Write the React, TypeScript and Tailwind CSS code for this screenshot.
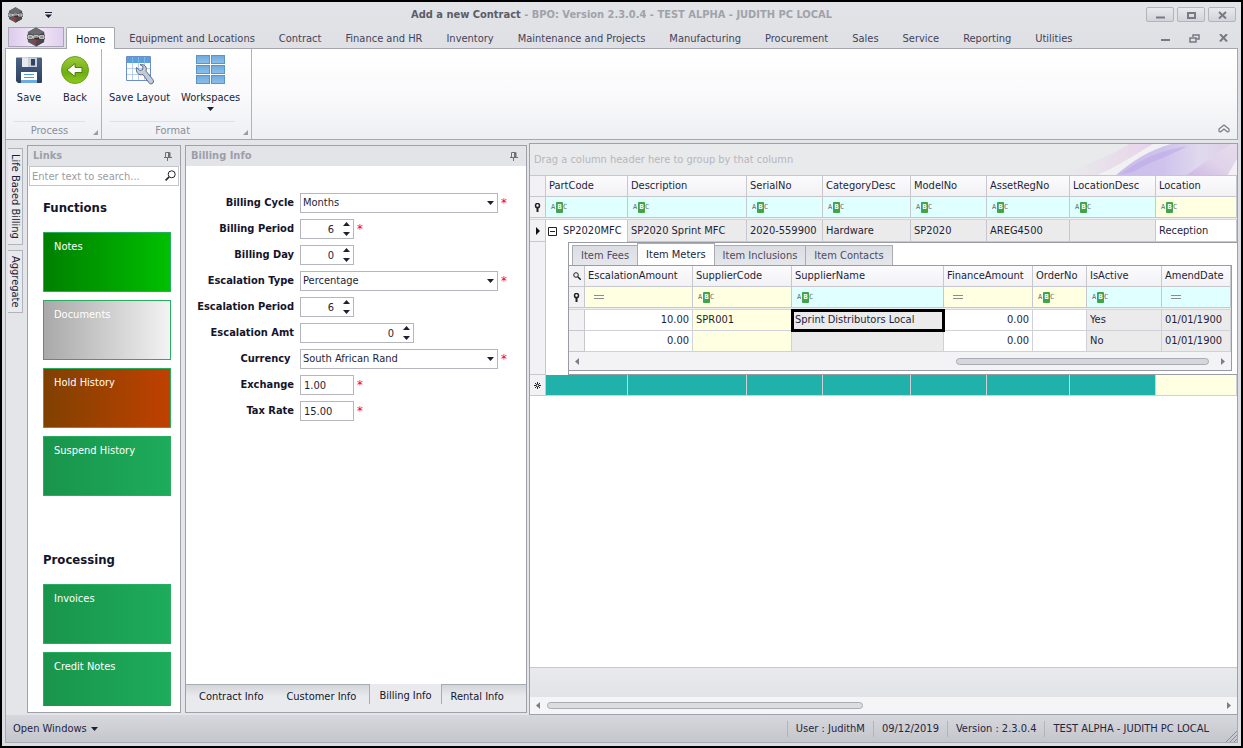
import type { ReactNode } from "react";
import clsx from "clsx";

const RIBBON_TABS = [
  "Equipment and Locations",
  "Contract",
  "Finance and HR",
  "Inventory",
  "Maintenance and Projects",
  "Manufacturing",
  "Procurement",
  "Sales",
  "Service",
  "Reporting",
  "Utilities",
];

interface Tile {
  label: string;
  className: string;
}

const FUNCTION_TILES: Tile[] = [
  { label: "Notes", className: "bg-linear-to-r from-[#008000] to-[#00c000]" },
  { label: "Documents", className: "bg-linear-to-r from-[#a9a9a9] to-[#f3f3f3]" },
  { label: "Hold History", className: "bg-linear-to-r from-[#804000] to-[#c04000]" },
  { label: "Suspend History", className: "bg-linear-to-r from-[#19954b] to-[#1dac5b]" },
];

const PROCESSING_TILES: Tile[] = [
  { label: "Invoices", className: "bg-linear-to-r from-[#19954b] to-[#1dac5b]" },
  { label: "Credit Notes", className: "bg-linear-to-r from-[#19954b] to-[#1dac5b]" },
];

interface Field {
  id: string;
  label: string;
  kind: "select" | "spin" | "text";
  value: string;
  width: string;
  required?: boolean;
}

const FIELDS: Field[] = [
  { id: "cycle", label: "Billing Cycle", kind: "select", value: "Months", width: "w-[198px]", required: true },
  { id: "period", label: "Billing Period", kind: "spin", value: "6", width: "w-[54px]", required: true },
  { id: "day", label: "Billing Day", kind: "spin", value: "0", width: "w-[54px]" },
  { id: "esc-type", label: "Escalation Type", kind: "select", value: "Percentage", width: "w-[198px]", required: true },
  { id: "esc-period", label: "Escalation Period", kind: "spin", value: "6", width: "w-[54px]" },
  { id: "esc-amt", label: "Escalation Amt", kind: "spin", value: "0", width: "w-[114px]" },
  { id: "currency", label: "Currency ", kind: "select", value: "South African Rand", width: "w-[198px]", required: true },
  { id: "exchange", label: "Exchange", kind: "text", value: "1.00", width: "w-[54px]", required: true },
  { id: "tax", label: "Tax Rate", kind: "text", value: "15.00", width: "w-[54px]", required: true },
];

interface Column {
  name: string;
  col: string;
  filter: "abc" | "eq";
  yellow?: boolean;
}

const ITEM_COLUMNS: Column[] = [
  { name: "PartCode", col: "w-[82px]", filter: "abc" },
  { name: "Description", col: "w-[119px]", filter: "abc" },
  { name: "SerialNo", col: "w-[76px]", filter: "abc" },
  { name: "CategoryDesc", col: "w-[88px]", filter: "abc" },
  { name: "ModelNo", col: "w-[76px]", filter: "abc" },
  { name: "AssetRegNo", col: "w-[83px]", filter: "abc" },
  { name: "LocationDesc", col: "w-[86px]", filter: "abc" },
  { name: "Location", col: "", filter: "abc", yellow: true },
];

const METER_COLUMNS: Column[] = [
  { name: "EscalationAmount", col: "w-[108px]", filter: "eq", yellow: true },
  { name: "SupplierCode", col: "w-[99px]", filter: "abc", yellow: true },
  { name: "SupplierName", col: "", filter: "abc" },
  { name: "FinanceAmount", col: "w-[89px]", filter: "eq", yellow: true },
  { name: "OrderNo", col: "w-[54px]", filter: "abc", yellow: true },
  { name: "IsActive", col: "w-[75px]", filter: "abc" },
  { name: "AmendDate", col: "w-[69px]", filter: "eq" },
];

const METER_ROWS = [
  ["10.00", "SPR001", "Sprint Distributors Local", "0.00", "", "Yes", "01/01/1900"],
  ["0.00", "", "", "0.00", "", "No", "01/01/1900"],
];

const METER_CELL = [
  "bg-white text-right",
  "bg-[#ffffe1]",
  "bg-[#ebebeb]",
  "bg-white text-right",
  "bg-white",
  "bg-[#ebebeb]",
  "bg-[#ebebeb]",
];

const STATUS_ITEMS = ["User : JudithM", "09/12/2019", "Version : 2.3.0.4", "TEST ALPHA - JUDITH PC LOCAL"];

function HexLogo({ className }: { className: string }) {
  return (
    <svg viewBox="0 0 20 22" className={className} aria-hidden="true">
      <path d="M10 .5 19 5.5v11L10 21.5 1 16.5v-11z" fill="#5a5a5d" />
      <path d="M10 .5 19 5.5 10 11 1 5.5z" fill="#6b6b70" />
      <path d="M10 11v10.5L19 16.5v-11z" fill="#47474a" />
      <path d="M0 8.500h20v5H0z" fill="#2e2e30" />
      <path
        d="M1 9.500h5v3H1zM1 11h5M7.500 13V9.500h5V11h-5M14 9.500h5v3h-5zM14 11h5"
        fill="none"
        stroke="#ececee"
        strokeWidth="1"
      />
      <circle cx="8" cy="17" r="1.500" fill="none" stroke="#d3232b" />
      <path d="M10 14.500 12.500 16" stroke="#d3232b" />
    </svg>
  );
}

function SaveIcon() {
  return (
    <svg viewBox="0 0 28 28" className="size-7" aria-hidden="true">
      <defs>
        <linearGradient id="disk" x1="0" y1="0" x2="0" y2="1">
          <stop offset="0" stopColor="#4a6287" />
          <stop offset="1" stopColor="#2d3f5f" />
        </linearGradient>
      </defs>
      <path d="M1 2.500a1 1 0 0 1 1-1h24a1 1 0 0 1 1 1V26a1 1 0 0 1-1 1H3l-2-2z" fill="url(#disk)" />
      <path d="M7 1.500h15v9.500H7z" fill="#c9d0da" />
      <path d="M7 1.500h6v9.500H7z" fill="#e6eaf0" />
      <path d="M16 3h4v6.500h-4z" fill="#2f4262" />
      <path d="M6 16h16v11H6z" fill="#fff" />
      <path d="M6 24h16v3H6z" fill="#6aaee4" />
      <path d="M9 18.500h10M9 21.500h10" stroke="#4d9bdc" />
    </svg>
  );
}

function BackIcon() {
  return (
    <svg viewBox="0 0 28 28" className="size-7" aria-hidden="true">
      <defs>
        <linearGradient id="back" x1="0" y1="0" x2="0" y2="1">
          <stop offset="0" stopColor="#9ccb3a" />
          <stop offset="0.600" stopColor="#6fae12" />
          <stop offset="1" stopColor="#8ecb1e" />
        </linearGradient>
      </defs>
      <circle cx="14" cy="14" r="13.500" fill="url(#back)" stroke="#6d9f22" />
      <path d="m6 14 8-6.500v4h7v5h-7v4z" fill="#fff" stroke="#4c8207" strokeLinejoin="round" />
    </svg>
  );
}

function LayoutIcon() {
  return (
    <svg viewBox="0 0 30 30" className="h-[30px] w-[30px]" aria-hidden="true">
      <path d="M1.500 1.500h24v24h-24z" fill="#fdfeff" stroke="#6c8fca" />
      <path d="M2 2h23v6H2z" fill="#5a9fdd" />
      <path d="M2 13.500h23M2 19.500h23M7.500 8v17M13.500 8v17M19.500 8v17" stroke="#b9cff0" />
      <path d="M7.500 2v6M13.500 2v6M19.500 2v6" stroke="#7fb6e8" />
      <path
        d="M11.500 12.500 15 15.500l2.500-.8.500-3-3-2c4-1 7.500 2 6 6.500l7 8.500c1 1.500.5 3.300-1 4-1.300.5-2.500 0-3.200-1L18 19.500c-4 1.500-7.500-2-6.500-7z"
        fill="#c3cbd8"
        stroke="#5c6b84"
        strokeLinejoin="round"
      />
    </svg>
  );
}

function WorkspacesIcon() {
  return (
    <svg viewBox="0 0 30 30" className="h-[30px] w-[30px]" aria-hidden="true">
      <defs>
        <linearGradient id="pane" x1="0" y1="0" x2="0" y2="1">
          <stop offset="0" stopColor="#6ea9dc" />
          <stop offset="1" stopColor="#8dc0ea" />
        </linearGradient>
      </defs>
      {[0.5, 10.5, 20.5].map((y) =>
        [0.5, 15.5].map((x) => (
          <rect key={`${x}-${y}`} x={x} y={y} width="13" height="8" fill="url(#pane)" stroke="#5b93cb" />
        )),
      )}
    </svg>
  );
}

function PinIcon() {
  return (
    <svg viewBox="0 0 8 9" className="h-[9px] w-2" aria-hidden="true">
      <path d="M1.500 5.500V.5h4v5" fill="none" stroke="#6d7079" />
      <path d="M4 .5h2.500v5H4zM0 5h8v1H0zM3 6h1v3H3z" fill="#6d7079" />
    </svg>
  );
}

function Caret({ dir = "down", className }: { dir?: "down" | "up"; className?: string }) {
  return (
    <svg viewBox="0 0 7 4" className={clsx("h-1 w-[7px]", className)} aria-hidden="true">
      <path d={dir === "down" ? "M0 0h7L3.500 4z" : "M0 4h7L3.500 0z"} fill="#1f1f33" />
    </svg>
  );
}

function SideArrow({ dir }: { dir: "left" | "right" }) {
  return (
    <svg viewBox="0 0 4 7" className="h-[7px] w-1 shrink-0" aria-hidden="true">
      <path d={dir === "left" ? "M4 0v7L0 3.500z" : "M0 0v7l4-3.500z"} fill="#7b7e88" />
    </svg>
  );
}

function FilterPin() {
  return (
    <svg viewBox="0 0 7 9" className="mx-auto h-[9px] w-[7px]" aria-hidden="true">
      <circle cx="3.500" cy="2.500" r="2" fill="#fff" stroke="#222" strokeWidth="1.500" />
      <path d="M1 4h5L4.500 5.500V9h-2V5.500z" fill="#222" />
    </svg>
  );
}

function FilterGlyph({ kind }: { kind: "abc" | "eq" }) {
  if (kind === "eq") {
    return (
      <svg viewBox="0 0 10 5" className="ml-1 h-[5px] w-[10px]" aria-hidden="true">
        <path d="M0 .5h10M0 3.500h10" stroke="#8b8b90" />
      </svg>
    );
  }
  return (
    <span className="flex items-center font-['DejaVu_Sans_Mono',monospace] text-[7px] leading-[11px] text-[#66666c]">
      <span className="w-[5px]">A</span>
      <span className="w-[7px] rounded-[1px] bg-[#3fa548] text-center font-bold text-white">B</span>
      <span>C</span>
    </span>
  );
}

interface RibbonButtonProps {
  icon: ReactNode;
  label: string;
  className: string;
  caret?: boolean;
}

function RibbonButton({ icon, label, className, caret }: RibbonButtonProps) {
  return (
    <button className={clsx("flex flex-col items-center pt-1 whitespace-nowrap", className)}>
      <span className="flex h-[34px] items-center">{icon}</span>
      <span className="mt-[3px] leading-4">{label}</span>
      {caret && <Caret className="mt-px" />}
    </button>
  );
}

function RibbonGroup({ caption, children }: { caption: string; children: ReactNode }) {
  return (
    <div className="relative flex flex-col border-r border-[#b1b3ba]">
      <div className="flex flex-1 pr-[3px]">{children}</div>
      <div className="mr-4 ml-2 border-t border-[#dfe0e5] pt-px text-center leading-4 text-[#8b8e97]">{caption}</div>
      <svg viewBox="0 0 5 5" className="absolute right-[3px] bottom-1 size-[5px]" aria-hidden="true">
        <path d="M5 0v5H0z" fill="#9b9da5" />
      </svg>
    </div>
  );
}

function PanelHeader({ title }: { title: string }) {
  return (
    <div className="flex h-5 shrink-0 items-center justify-between bg-[#e3e4e8] pr-2 pl-[5px]">
      <h2 className="font-bold text-[#9c9fa9]">{title}</h2>
      <button aria-label={`Pin ${title}`}>
        <PinIcon />
      </button>
    </div>
  );
}

function TileGroup({ title, tiles }: { title: string; tiles: Tile[] }) {
  return (
    <section>
      <h3 className="mb-4 text-[13px] leading-4 font-bold text-[#14142b]">{title}</h3>
      <div className="flex flex-col gap-2">
        {tiles.map((t) => (
          <button
            key={t.label}
            className={clsx(
              "flex h-[60px] items-start border border-[#27ae60] px-[10px] pt-[6px] leading-4 text-white",
              t.className,
            )}
          >
            {t.label}
          </button>
        ))}
      </div>
    </section>
  );
}

function FieldRow({ field }: { field: Field }) {
  const box = "h-5 border border-[#b4b7be] bg-white outline-none";
  return (
    <>
      <label htmlFor={field.id} className="text-right font-bold whitespace-pre text-[#14142b]">
        {field.label}
      </label>
      <div className="flex items-center gap-[3px]">
        <div className={clsx("relative flex", field.width)}>
          {field.kind === "select" && (
            <>
              <select id={field.id} defaultValue={field.value} className={clsx(box, "w-full appearance-none pl-[2px]")}>
                <option>{field.value}</option>
              </select>
              <Caret className="pointer-events-none absolute top-2 right-1" />
            </>
          )}
          {field.kind === "spin" && (
            <>
              <input id={field.id} defaultValue={field.value} className={clsx(box, "w-full pr-[19px] text-right")} />
              <span className="absolute top-[3px] right-1 flex flex-col gap-[6px]">
                <button type="button" aria-label={`Increase ${field.label}`}>
                  <Caret dir="up" />
                </button>
                <button type="button" aria-label={`Decrease ${field.label}`}>
                  <Caret />
                </button>
              </span>
            </>
          )}
          {field.kind === "text" && (
            <input id={field.id} defaultValue={field.value} className={clsx(box, "w-full pl-[3px]")} />
          )}
        </div>
        {field.required && <span className="text-[13px] leading-4 text-[#ff0000]">*</span>}
      </div>
    </>
  );
}

const TH =
  "border-r border-b border-[#c6c8ce] bg-linear-to-b from-[#fcfcfd] to-[#f2f2f5] p-0 pl-[3px] text-left font-normal";
const INDICATOR = "border-r border-b border-[#c6c8ce] bg-[#f2f2f5] p-0";

function FilterRow({ columns }: { columns: Column[] }) {
  return (
    <>
      <tr className="h-[21px]">
        <td className={INDICATOR}>
          <FilterPin />
        </td>
        {columns.map((c) => (
          <td
            key={c.name}
            className={clsx(
              "border-r border-b border-[#c6c8ce] p-0 pl-[5px]",
              c.yellow ? "bg-[#ffffe1]" : "bg-[#e0ffff]",
            )}
          >
            <FilterGlyph kind={c.filter} />
          </td>
        ))}
      </tr>
      <tr className="h-[2px]">
        <td colSpan={columns.length + 1} className="border-b border-[#d4d5da] bg-[#f0f0f3] p-0" />
      </tr>
    </>
  );
}

function MetersTable() {
  return (
    <table className="w-full table-fixed border-separate border-spacing-0">
      <colgroup>
        <col className="w-4" />
        {METER_COLUMNS.map((c) => (
          <col key={c.name} className={c.col} />
        ))}
      </colgroup>
      <thead>
        <tr className="h-[21px]">
          <th className={INDICATOR}>
            <svg viewBox="0 0 8 8" className="mx-auto size-2" aria-hidden="true">
              <circle cx="3" cy="3" r="2.300" fill="none" stroke="#222" />
              <path d="m4.800 4.800 3 3" stroke="#222" strokeWidth="1.500" />
            </svg>
          </th>
          {METER_COLUMNS.map((c) => (
            <th key={c.name} className={TH}>
              {c.name}
            </th>
          ))}
        </tr>
      </thead>
      <tbody>
        <FilterRow columns={METER_COLUMNS} />
        {METER_ROWS.map((row, r) => (
          <tr key={r} className="h-[21px]">
            <td className={INDICATOR} />
            {row.map((value, i) => (
              <td
                key={i}
                className={clsx(
                  "border-r border-b border-[#d0d1d6] p-0 px-[3px] whitespace-nowrap",
                  METER_CELL[i],
                  r === 0 && i === 2 && "outline-[3px] -outline-offset-2 outline-black",
                )}
              >
                {value}
              </td>
            ))}
          </tr>
        ))}
      </tbody>
    </table>
  );
}

function DetailTabs() {
  const tab = "border border-b-0 border-[#a9abb3] px-2";
  const idle = "h-5 bg-linear-to-b from-[#dcdde2] to-[#e6e7eb] text-[#4b4b61]";
  return (
    <div className="flex h-[22px] items-end pl-[3px]">
      <button className={clsx(tab, idle, "border-r-0")}>Item Fees</button>
      <button className={clsx(tab, "h-[22px] bg-white")}>Item Meters</button>
      <button className={clsx(tab, idle, "border-l-0")}>Item Inclusions</button>
      <button className={clsx(tab, idle, "border-l-0")}>Item Contacts</button>
    </div>
  );
}

function ItemsGrid() {
  const cell = "border-r border-b border-[#c6c8ce] p-0 pl-[3px] whitespace-nowrap";
  return (
    <table className="w-full table-fixed border-separate border-spacing-0">
      <colgroup>
        <col className="w-4" />
        {ITEM_COLUMNS.map((c) => (
          <col key={c.name} className={c.col} />
        ))}
      </colgroup>
      <thead>
        <tr className="h-[21px]">
          <th className={INDICATOR} />
          {ITEM_COLUMNS.map((c) => (
            <th key={c.name} className={TH}>
              {c.name}
            </th>
          ))}
        </tr>
      </thead>
      <tbody>
        <FilterRow columns={ITEM_COLUMNS} />
        <tr className="h-[22px]">
          <td className={INDICATOR}>
            <svg viewBox="0 0 4 8" className="mx-auto h-2 w-1" aria-hidden="true">
              <path d="M0 0v8l4-4z" fill="#111" />
            </svg>
          </td>
          <td className="border-r border-[#c6c8ce] bg-white p-0 pl-[2px]">
            <span className="flex items-center gap-[6px]">
              <button aria-label="Collapse row">
                <svg viewBox="0 0 9 9" className="size-[9px]" aria-hidden="true">
                  <path d="M.5.5h8v8h-8zM2 4.500h5" fill="none" stroke="#222" />
                </svg>
              </button>
              SP2020MFC
            </span>
          </td>
          <td className={clsx(cell, "bg-[#ebebeb]")}>SP2020 Sprint MFC</td>
          <td className={clsx(cell, "bg-[#ebebeb]")}>2020-559900</td>
          <td className={clsx(cell, "bg-[#ebebeb]")}>Hardware</td>
          <td className={clsx(cell, "bg-[#ebebeb]")}>SP2020</td>
          <td className={clsx(cell, "bg-[#ebebeb]")}>AREG4500</td>
          <td className={clsx(cell, "bg-[#ebebeb]")} />
          <td className={clsx(cell, "bg-white")}>Reception</td>
        </tr>
        <tr>
          <td className={INDICATOR} />
          <td colSpan={8} className="bg-white p-0 pl-[22px]">
            <div className="border border-r-0 border-[#9a9ca5] pr-[5px] pb-[3px]">
              <DetailTabs />
              <div className="border-t border-r border-b border-[#9a9ca5] bg-[#f3f3f6]">
                <MetersTable />
                <div className="flex h-[18px] items-center gap-3 px-[6px]">
                  <SideArrow dir="left" />
                  <div className="flex flex-1 justify-end">
                    <div className="h-[7px] w-[41%] rounded-full border border-[#a9abb3] bg-[#d6d7dc]" />
                  </div>
                  <SideArrow dir="right" />
                </div>
              </div>
            </div>
          </td>
        </tr>
        <tr className="h-[21px]">
          <td className={INDICATOR}>
            <svg viewBox="0 0 9 9" className="mx-auto size-[9px]" aria-hidden="true">
              <path d="M4.500 1v7M1 4.500h7M2 2l5 5M7 2 2 7" stroke="#222" />
              <circle cx="4.500" cy="4.500" r="1" fill="#fff" />
            </svg>
          </td>
          {ITEM_COLUMNS.map((c) => (
            <td
              key={c.name}
              className={clsx("border-r border-b border-[#d0d1d6] p-0", c.yellow ? "bg-[#ffffe1]" : "bg-[#20b2aa]")}
            />
          ))}
        </tr>
      </tbody>
    </table>
  );
}

function TitleBar() {
  const btn =
    "flex h-[15px] w-7 items-center justify-center rounded-[2px] border border-[#b3b5bc] bg-linear-to-b from-[#e9eaee] to-[#d3d4da]";
  return (
    <header className="grid h-[25px] shrink-0 grid-cols-[1fr_auto_1fr] items-center">
      <div className="flex items-center gap-[22px] pl-[3px]">
        <HexLogo className="h-4 w-[15px]" />
        <button aria-label="Customize toolbar">
          <svg viewBox="0 0 7 6" className="h-[6px] w-[7px]" aria-hidden="true">
            <path d="M0 0h7v1H0zM0 2.500h7L3.500 6z" fill="#1f1f33" />
          </svg>
        </button>
      </div>
      <h1 className="font-bold text-[#a0a2aa]">
        <span className="text-[#5b5d68]">Add a new Contract</span> - BPO: Version 2.3.0.4 - TEST ALPHA - JUDITH PC LOCAL
      </h1>
      <div className="flex justify-end gap-[3px] pr-[2px]">
        <button aria-label="Minimize" className={btn}>
          <svg viewBox="0 0 9 8" className="h-2 w-[9px]">
            <path d="M0 5.500h9v2H0z" fill="#777a84" />
          </svg>
        </button>
        <button aria-label="Maximize" className={btn}>
          <svg viewBox="0 0 9 8" className="h-2 w-[9px]">
            <path d="M1 2h7v5H1z" fill="none" stroke="#777a84" strokeWidth="2" />
          </svg>
        </button>
        <button aria-label="Close" className={btn}>
          <svg viewBox="0 0 9 8" className="h-2 w-[9px]">
            <path d="m1 1 7 6.500M8 1 1 7.500" stroke="#777a84" strokeWidth="2" />
          </svg>
        </button>
      </div>
    </header>
  );
}

function RibbonTabs() {
  return (
    <nav className="z-10 -mb-px flex h-[22px] shrink-0 items-stretch text-[#43435a]">
      <button
        aria-label="Application menu"
        className="ml-[3px] flex h-5 w-14 items-center justify-center border border-[#a9a5b6] bg-linear-to-r from-[#dccbee] via-[#f3e9f7] to-[#e0cff0]"
      >
        <HexLogo className="h-5 w-[18px]" />
      </button>
      <button className="mr-[2px] ml-[2px] rounded-t-[2px] border border-b-0 border-[#a5a7b0] bg-white px-[9px] pt-[2px] text-[#14142b]">
        Home
      </button>
      {RIBBON_TABS.map((t) => (
        <button key={t} className="px-3 pt-[2px] whitespace-nowrap">
          {t}
        </button>
      ))}
      <div className="ml-auto flex items-center gap-[19px] pr-[10px]">
        <button aria-label="Minimize child window">
          <svg viewBox="0 0 9 8" className="h-2 w-[9px]">
            <path d="M0 5h9v2H0z" fill="#777a84" />
          </svg>
        </button>
        <button aria-label="Restore child window">
          <svg viewBox="0 0 11 9" className="h-[9px] w-[11px]">
            <path d="M4 3V1h6v4H7M1 4h6v4H1z" fill="none" stroke="#777a84" strokeWidth="1.500" />
          </svg>
        </button>
        <button aria-label="Close child window">
          <svg viewBox="0 0 9 8" className="h-2 w-[9px]">
            <path d="m1 0 7 7.500M8 0 1 7.500" stroke="#777a84" strokeWidth="2" />
          </svg>
        </button>
      </div>
    </nav>
  );
}

function Ribbon() {
  return (
    <div className="relative flex h-[92px] shrink-0 border border-[#a5a7b0] bg-linear-to-b from-white via-[#fafafc] to-[#eeeff3]">
      <RibbonGroup caption="Process">
        <RibbonButton icon={<SaveIcon />} label="Save" className="px-[9px]" />
        <RibbonButton icon={<BackIcon />} label="Back" className="px-[9px]" />
      </RibbonGroup>
      <RibbonGroup caption="Format">
        <RibbonButton icon={<LayoutIcon />} label="Save Layout" className="px-[7px]" />
        <RibbonButton icon={<WorkspacesIcon />} label="Workspaces" className="pr-2 pl-1" caret />
      </RibbonGroup>
      <button aria-label="Collapse ribbon" className="absolute right-[7px] bottom-[6px]">
        <svg viewBox="0 0 12 9" className="h-[9px] w-3">
          <path
            d="M1 5 6 1l5 4v2.500L9.500 8 6 5 2.500 8 1 7.500z"
            fill="none"
            stroke="#777a84"
            strokeWidth="1.200"
            strokeLinejoin="round"
          />
        </svg>
      </button>
    </div>
  );
}

function LinksPanel() {
  return (
    <aside className="flex w-[154px] shrink-0 flex-col border border-[#9fa1aa] bg-white">
      <PanelHeader title="Links" />
      <div className="relative mx-px flex">
        <input
          type="search"
          aria-label="Search links"
          placeholder="Enter text to search..."
          className="h-5 w-full border border-[#c3c5cb] pl-[2px] outline-none placeholder:text-[#9b9ca4]"
        />
        <svg viewBox="0 0 11 11" className="absolute top-[4px] right-[3px] size-[11px]" aria-hidden="true">
          <circle cx="6.700" cy="4.300" r="3.500" fill="none" stroke="#222" />
          <path d="M4 7 .6 10.400" stroke="#222" strokeWidth="1.600" />
        </svg>
      </div>
      <div className="mb-[6px] flex min-h-0 flex-1 flex-col gap-14 overflow-hidden pt-[14px] pr-[9px] pl-[15px]">
        <TileGroup title="Functions" tiles={FUNCTION_TILES} />
        <TileGroup title="Processing" tiles={PROCESSING_TILES} />
      </div>
    </aside>
  );
}

function BillingPanel() {
  const edge = "mb-2 border-t border-[#a9abb3] bg-linear-to-b from-[#d4d5da] to-[#e9eaed] to-60% pt-1";
  return (
    <section className="flex w-[342px] shrink-0 flex-col border border-[#9fa1aa] bg-white">
      <PanelHeader title="Billing Info" />
      <form className="grid flex-1 auto-rows-[20px] grid-cols-[108px_1fr] items-center gap-x-[6px] gap-y-[6px] pt-[27px]">
        {FIELDS.map((f) => (
          <FieldRow key={f.id} field={f} />
        ))}
      </form>
      <div className="flex h-7 shrink-0 bg-[#e9eaed] text-[#14142b]">
        <button className={clsx(edge, "pr-3 pl-[13px]")}>Contract Info</button>
        <button className={clsx(edge, "border-r pr-[13px] pl-[11px]")}>Customer Info</button>
        <button className="mb-2 px-[9px] pt-1">Billing Info</button>
        <button className={clsx(edge, "flex-1 border-l pl-[9px] text-left")}>Rental Info</button>
      </div>
    </section>
  );
}

function GroupPanel() {
  return (
    <div className="relative flex h-8 shrink-0 items-center overflow-hidden border-b border-[#c6c8ce] bg-[#e9eaec] pl-1 text-[#b5b7bd]">
      <svg viewBox="0 0 170 32" className="absolute right-0 h-8 w-[170px]" aria-hidden="true">
        <defs>
          <linearGradient id="pink" x1="0" y1="0" x2="1" y2="0">
            <stop offset="0" stopColor="#e9eaec" />
            <stop offset="1" stopColor="#e8d3ea" />
          </linearGradient>
          <linearGradient id="violet" x1="0" y1="0" x2="1" y2="0">
            <stop offset="0" stopColor="#cbbdeb" />
            <stop offset="0.400" stopColor="#cfc3ec" />
            <stop offset="0.700" stopColor="#e0d9ee" />
            <stop offset="1" stopColor="#dccfe6" />
          </linearGradient>
          <linearGradient id="lilac" x1="0" y1="1" x2="1" y2="0">
            <stop offset="0" stopColor="#cdb6e2" />
            <stop offset="0.500" stopColor="#e0d3ea" />
            <stop offset="1" stopColor="#e5dcec" />
          </linearGradient>
        </defs>
        <path d="M0 26C30 18 50 8 62 0h26C66 12 48 24 30 32H0z" fill="url(#pink)" />
        <path d="M28 32C48 24 66 12 86 0h18C80 8 62 20 48 32z" fill="#f1f1f4" />
        <path d="M48 32C64 18 82 6 104 0h66v32z" fill="url(#violet)" />
        <path d="M54 30C74 14 96 6 120 2 104 12 86 16 66 28z" fill="#b9a6e8" opacity=".5" />
        <path d="M118 32C134 22 150 8 164 0h6v16l-10 16z" fill="url(#lilac)" />
        <path d="m170 15-10 17h10z" fill="#f3f1f6" />
      </svg>
      <span className="relative">Drag a column header here to group by that column</span>
    </div>
  );
}

function GridPanel() {
  return (
    <section className="flex min-w-0 flex-1 flex-col border border-[#9fa1aa] bg-white">
      <GroupPanel />
      <div className="min-h-0 flex-1 overflow-hidden">
        <ItemsGrid />
      </div>
      <div className="h-[30px] shrink-0 border-t border-[#c6c8ce] bg-linear-to-b from-[#e9eaed] to-[#e2e3e7]" />
      <div className="flex h-[17px] shrink-0 items-center gap-[7px] bg-[#f5f5f8] px-[6px]">
        <SideArrow dir="left" />
        <div className="flex-1">
          <div className="h-[7px] w-[47%] rounded-full border border-[#a9abb3] bg-[#dcdde1]" />
        </div>
        <SideArrow dir="right" />
      </div>
    </section>
  );
}

function StatusBar() {
  return (
    <footer className="flex h-7 shrink-0 items-center justify-between border border-t-0 border-[#a9abb3] bg-linear-to-b from-[#d7d8dd] to-[#c5c6cc] pl-[7px] text-[#25253f]">
      <button className="flex items-center gap-1">
        Open Windows <Caret />
      </button>
      <div className="flex h-full items-center">
        {STATUS_ITEMS.map((s) => (
          <span key={s} className="border-l border-[#b2b4bb] px-2">
            {s}
          </span>
        ))}
        <svg viewBox="0 0 12 12" className="ml-2 size-3 self-end" aria-hidden="true">
          <path d="M1 12 12 1M5 12l7-7M9 12l3-3" stroke="#8c8e97" />
        </svg>
      </div>
    </footer>
  );
}

export default function App() {
  return (
    <div className="flex h-screen flex-col border-2 border-black bg-linear-to-b from-[#e3e4e8] via-[#dcdde2] via-10% to-[#dcdde2] px-[3px] pb-[3px] font-['DejaVu_Sans_Condensed','Noto_Sans',sans-serif] text-[11px] leading-4 text-[#1e1e38]">
      <TitleBar />
      <RibbonTabs />
      <Ribbon />
      <main className="flex min-h-0 flex-1 border-l border-[#a9abb3] bg-[#e4e5e9] pt-[3px]">
        <div className="flex w-[21px] shrink-0 flex-col items-start gap-[5px] pt-[5px] pl-[2px]">
          {["Life Based Billing", "Aggregate"].map((t) => (
            <button
              key={t}
              className="flex w-[15px] items-center justify-center border border-l-0 border-[#b1b3ba] bg-[#e9eaed] py-[5px]"
            >
              <span className="leading-[14px] [writing-mode:vertical-rl]">{t}</span>
            </button>
          ))}
        </div>
        <div className="flex shrink-0 gap-1 pt-[2px] pr-[2px] pb-[2px]">
          <LinksPanel />
          <BillingPanel />
        </div>
        <GridPanel />
      </main>
      <StatusBar />
    </div>
  );
}
